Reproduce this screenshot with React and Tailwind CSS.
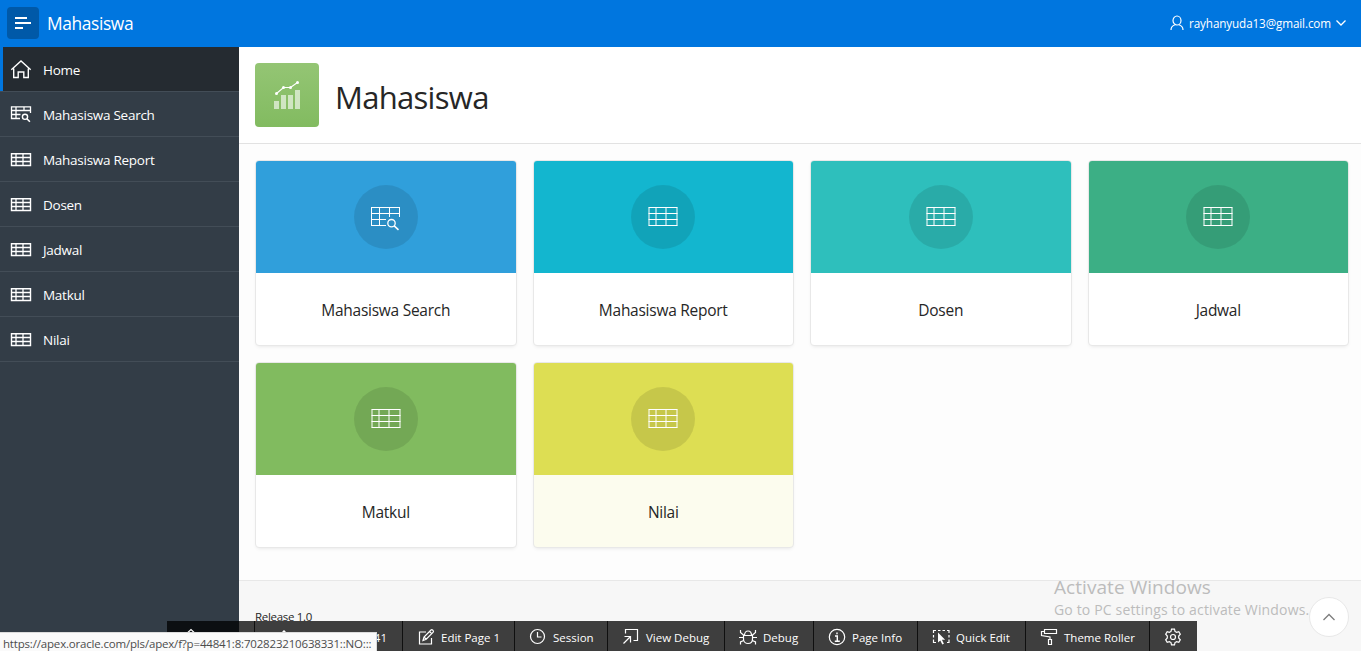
import React from "react";

const TableIcon = ({ className }) => (
  <svg viewBox="0 0 30 20" className={className} fill="none" stroke="currentColor">
    <path d="M.5 .5h29M.5 6.500h29M.5 12.500h29M.5 18.500h29M1 .5v18M8 .5v18M18 .5v18M29 .5v18" />
  </svg>
);

const TableSearchIcon = ({ className }) => (
  <svg viewBox="0 0 30 24" className={className} fill="none" stroke="currentColor">
    <path d="M14.500 18.500H.5V.5h28v9.500M.5 6.500h28M.5 12.500h14M8.500 .5v18M18.500 .5v9.500" shapeRendering="crispEdges" />
    <circle cx="20.500" cy="16.200" r="3.700" strokeWidth="1.300" />
    <path d="M23.200 18.900l4.300 4" strokeWidth="1.500" />
  </svg>
);

const NavTableIcon = () => (
  <svg viewBox="0 0 22 14" className="mt-px h-[14px] w-[22px]" fill="none" stroke="currentColor">
    <path d="M1.500 .8h19v11.700h-19z" strokeWidth="1.400" />
    <path d="M1.500 4.500h19M1.500 8.500h19M6 .5v12M13 .5v12" strokeWidth="1.300" />
  </svg>
);

const NavSearchIcon = () => (
  <svg viewBox="0 0 22 17" className="mt-px h-[17px] w-[22px]" fill="none" stroke="currentColor">
    <path d="M10 12.500H1.500V.8h19V7M1.500 4.500h19M1.500 8.500h9M6 .5v12M14 .5V5" strokeWidth="1.300" />
    <circle cx="15" cy="10.800" r="2.600" strokeWidth="1.400" />
    <path d="M16.900 12.800l3 3" strokeWidth="1.600" />
  </svg>
);

const HomeIcon = () => (
  <svg viewBox="0 0 22 20" className="mt-[2px] h-5 w-[22px]" fill="none" stroke="currentColor" strokeWidth="1.400">
    <path d="M1.300 9.800L11 1l9.700 8.800M3.700 8.500v9h4.500v-5.500h5.600v5.500h4.500v-9" />
  </svg>
);

const nav = [
  { label: "Home", icon: <HomeIcon />, active: true },
  { label: "Mahasiswa Search", icon: <NavSearchIcon /> },
  { label: "Mahasiswa Report", icon: <NavTableIcon /> },
  { label: "Dosen", icon: <NavTableIcon /> },
  { label: "Jadwal", icon: <NavTableIcon /> },
  { label: "Matkul", icon: <NavTableIcon /> },
  { label: "Nilai", icon: <NavTableIcon /> },
];

const cards = [
  { label: "Mahasiswa Search", head: "bg-[#309fdb]", body: "bg-white", search: true },
  { label: "Mahasiswa Report", head: "bg-[#13b6cf]", body: "bg-white" },
  { label: "Dosen", head: "bg-[#2ebfbc]", body: "bg-white" },
  { label: "Jadwal", head: "bg-[#3caf85]", body: "bg-white" },
  { label: "Matkul", head: "bg-[#81bb5f]", body: "bg-white" },
  { label: "Nilai", head: "bg-[#ddde53]", body: "bg-[#fcfcee]" },
];

const Tool = ({ className, children, label }) => (
  <div className={`flex h-full shrink-0 items-center border-r border-black/75 ${className}`}>
    {children}
    {label && <span className="whitespace-nowrap pt-[3px]">{label}</span>}
  </div>
);

const Ico = ({ children, className = "" }) => (
  <svg viewBox="0 0 18 18" className={`mt-px h-[18px] w-[18px] shrink-0 ${className}`} fill="none" stroke="currentColor" strokeWidth="1.200">
    {children}
  </svg>
);

export default function App() {
  return (
    <div className="flex h-[651px] w-full flex-col overflow-hidden bg-[#fdfdfd] font-['Open_Sans',sans-serif] text-[#262626]">
      <header className="flex h-[47px] shrink-0 items-center bg-[#0076df] pl-[7px] pr-[14px] text-white">
        <button className="mb-px flex h-8 w-8 items-center justify-center rounded-sm bg-[#0059a8]">
          <svg viewBox="0 0 16 12" className="h-3 w-4" fill="none" stroke="currentColor" strokeWidth="2" shapeRendering="crispEdges">
            <path d="M0 1h12M0 6h16M0 11h8" />
          </svg>
        </button>
        <span className="ml-2 text-[17.4px] tracking-[-0.4px]">Mahasiswa</span>
        <div className="ml-auto flex items-center">
          <svg viewBox="0 0 14 16" className="h-4 w-[14px]" fill="none" stroke="currentColor" strokeWidth="1.200">
            <ellipse cx="7" cy="5.500" rx="4" ry="4.500" />
            <path d="M1 15c0-2.800 1.500-4.500 4-5.300M13 15c0-2.800-1.500-4.500-4-5.300" />
          </svg>
          <span className="ml-[5px] text-[11.7px] tracking-[-0.12px]">rayhanyuda13@gmail.com</span>
          <svg viewBox="0 0 12 8" className="ml-1 h-2 w-3" fill="none" stroke="currentColor" strokeWidth="1.300">
            <path d="M1.500 1.500L6 6l4.500-4.500" />
          </svg>
        </div>
      </header>

      <div className="flex min-h-0 flex-1">
        <nav className="w-[239px] shrink-0 bg-[#333d47] text-[13.5px] tracking-[-0.27px] text-white">
          {nav.map((n) => (
            <div
              key={n.label}
              className={`flex h-[45px] items-center border-b border-[#434d57] ${n.active ? "bg-[#252b31] shadow-[inset_3px_0_0_#0076df]" : ""}`}
            >
              <span className="flex w-[43px] justify-start pl-[10px]">{n.icon}</span>
              <span className="pt-[2px]">{n.label}</span>
            </div>
          ))}
        </nav>

        <main className="flex min-w-0 flex-1 flex-col">
          <section className="flex h-[97px] shrink-0 items-center border-b border-[#e2e2e2] bg-white pl-4">
            <div className="flex h-16 w-16 items-center justify-center rounded bg-linear-to-b from-[#94c574] to-[#82bb60]">
              <svg viewBox="0 0 26 30" className="h-[30px] w-[26px]" fill="#fff">
                <path d="M0 21h5v8H0zM7 15h5v14H7zM14 15h5v14h-5zM21 10h5v19h-5z" opacity=".6" />
                <path d="M2.500 13.500l7-6h7l7-5" fill="none" stroke="#fff" strokeWidth="1.100" />
                <circle cx="2.500" cy="13.500" r="1.500" />
                <circle cx="9.500" cy="7.500" r="1.500" />
                <circle cx="16.500" cy="7.500" r="1.500" />
                <circle cx="23.500" cy="2.500" r="1.500" />
              </svg>
            </div>
            <h1 className="ml-4 pt-[3px] text-[31px] leading-10 tracking-[-0.7px]">Mahasiswa</h1>
          </section>

          <section className="grid grid-cols-4 gap-4 pb-8 pl-4 pr-3 pt-4">
            {cards.map((c) => (
              <article key={c.label} className={`flex h-[186px] flex-col overflow-hidden rounded-sm border border-[#e8e8e8] shadow-[0_2px_4px_-2px_rgba(0,0,0,0.12)] ${c.body}`}>
                <div className={`flex h-28 shrink-0 items-center justify-center ${c.head}`}>
                  <div className="flex h-16 w-16 items-center justify-center rounded-full bg-black/10 text-white">
                    {c.search ? <TableSearchIcon className="mt-1 h-6 w-[30px]" /> : <TableIcon className="h-5 w-[30px]" />}
                  </div>
                </div>
                <h2 className="flex flex-1 items-center justify-center pt-[3px] text-[15.5px] tracking-[-0.26px]">{c.label}</h2>
              </article>
            ))}
          </section>

          <footer className="flex-1 border-t border-[#e8e8e8] bg-[#f7f7f7] pl-4 pt-[27px]">
            <p className="text-[11.5px] leading-[18px] tracking-[-0.3px]">Release 1.0</p>
          </footer>
        </main>
      </div>

      <div className="absolute left-[1054px] top-[575px] whitespace-nowrap text-[#bcbcbc]">
        <p className="text-[19px] leading-6 tracking-[0.06px]">Activate Windows</p>
        <p className="pt-px text-[14px] leading-5 tracking-[0.16px]">Go to PC settings to activate Windows.</p>
      </div>

      <button className="absolute left-[1309px] top-[597px] flex h-10 w-10 items-center justify-center rounded-full border border-[#e8e8e8] bg-white text-[#7d7d7d]">
        <svg viewBox="0 0 14 8" className="h-2 w-[14px]" fill="none" stroke="currentColor" strokeWidth="1.300">
          <path d="M1.500 7L7 1.500 12.500 7" />
        </svg>
      </button>

      <div className="absolute left-[167px] top-[621px] flex h-[30px] w-[1030px] bg-black/75 text-[11.5px] text-white">
        <Tool className="w-[88px] pl-[15px]">
          <Ico><path d="M1 9l8-7.500L17 9M3 8v8h12V8" /></Ico>
        </Tool>
        <Tool className="w-[148px] justify-between pl-[20px] pr-[15px]" label="41">
          <Ico><path d="M9 2.500v13M6.500 5.500L9 3l2.500 2.500" strokeWidth="1.500" /></Ico>
        </Tool>
        <Tool className="w-[112px] pl-[14px]" label="Edit Page 1">
          <Ico className="mr-[6px]">
            <path d="M9 4H2.500v12h12v-6" />
            <path d="M6 12.500l1-3.500 7-7c1-1 3.200 1 2.200 2.200l-7 7zM12.500 3.500l2.200 2.200M7 9l2.200 2.200" />
          </Ico>
        </Tool>
        <Tool className="w-[93px] pl-[14px]" label="Session">
          <Ico className="mr-[6px]"><circle cx="8.500" cy="8.500" r="7" /><path d="M8.500 4v5h4" /></Ico>
        </Tool>
        <Tool className="w-[117px] pl-[14px]" label="View Debug">
          <Ico className="mr-[6px]"><path d="M3.500 5.500v-4h12v11h-4M1.500 15.500l6.500-6.500M2.500 8.500h6v6" /></Ico>
        </Tool>
        <Tool className="w-[89px] pl-[14px]" label="Debug">
          <Ico className="mr-[6px]">
            <path d="M4.500 7.500h9v3.500c0 6-9 6-9 0zM5.500 7.500c0-6 7-6 7 0M1.500 2v2.500l3.500 3M16.500 2v2.500l-3.500 3M0 9.500h4.500M13.500 9.500H18M1.500 16.500V14l3.200-1.500M16.500 16.500V14l-3.200-1.500" />
          </Ico>
        </Tool>
        <Tool className="w-[104px] pl-[14px]" label="Page Info">
          <Ico className="mr-[6px]"><circle cx="9" cy="9" r="7.700" /><path d="M7 8h2.300v5M6.800 13.200h5M9 4.500v1.700" strokeWidth="1.400" /></Ico>
        </Tool>
        <Tool className="w-[108px] pl-[14px]" label="Quick Edit">
          <Ico className="mr-[6px]">
            <path d="M1.500 5V2.500H4M6 2.500h2.500M10.500 2.500H13M15 2.500h2V5M1.500 7v2.500M1.500 11.500v3H4M17 7v2.500M17 11.500v3h-2" />
            <path d="M6 4.500v10l2.300-2 2 4 1.600-.8-2-3.900h3.200z" fill="currentColor" stroke="none" />
          </Ico>
        </Tool>
        <Tool className="w-[124px] pl-[14px]" label="Theme Roller">
          <Ico className="mr-[6px]"><path d="M4.500 1.500h12v4h-12zM4.500 3.500h-3v4l8.500 1.500v2M8.500 11.500h3v5h-3z" /></Ico>
        </Tool>
        <div className="flex flex-1 items-center justify-center pr-px">
          <Ico>
            <circle cx="9" cy="9" r="2.500" />
            <path d="M7.500 1.200h3l.5 2.200 1.600.9 2.200-.7 1.500 2.600L14.700 8v2l1.600 1.800-1.500 2.600-2.200-.7-1.600.9-.5 2.200h-3L7 14.600l-1.600-.9-2.200.7-1.500-2.600L3.300 10V8L1.700 6.200l1.500-2.600 2.200.7L7 3.400z" />
          </Ico>
        </div>
      </div>

      <div className="absolute left-0 top-[632px] flex h-[19px] w-[377px] items-center whitespace-nowrap border-r border-t border-[#dcdcdc] bg-[#fafafa] pl-[3px] pt-[3px] text-[11.5px] tracking-[-0.18px] text-[#4c4c4c]">
        https://apex.oracle.com/pls/apex/f?p=44841:8:702823210638331::NO:::
      </div>
    </div>
  );
}
